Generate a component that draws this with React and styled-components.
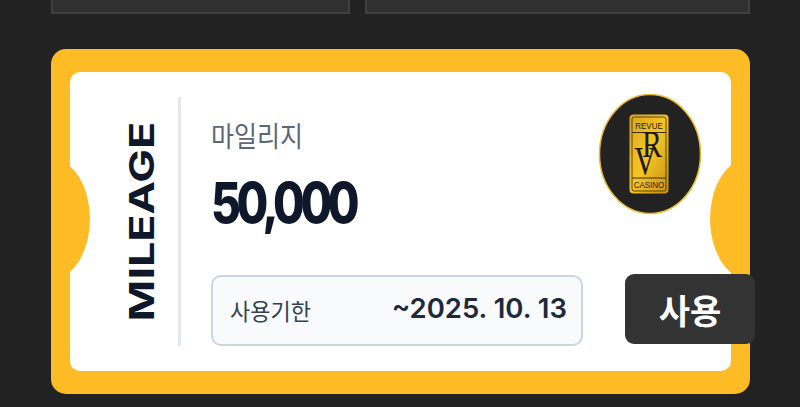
import styled, { createGlobalStyle } from "styled-components";

const GlobalStyle = createGlobalStyle`
  html, body {
    margin: 0;
    padding: 0;
    background: #222222;
    overflow: hidden;
  }
  body {
    font-family: "Noto Sans CJK KR", "Noto Sans", sans-serif;
  }
`;

const Page = styled.div`
  width: 800px;
  height: 407px;
  padding: 0 50px 0 51px;
  box-sizing: border-box;
  background: #222222;
`;

const TopRow = styled.div`
  display: grid;
  grid-template-columns: 299px 385px;
  gap: 15px;
  height: 14px;
  margin-bottom: 35px;
`;

const TopCard = styled.div`
  background: #303030;
  border: 2px solid #404040;
  border-top: 0;
`;

const Ticket = styled.div`
  position: relative;
  height: 345px;
  padding: 23px 19px;
  box-sizing: border-box;
  background: #fdbc25;
  border-radius: 15px;
`;

const Inner = styled.div`
  position: relative;
  display: flex;
  height: 299px;
  padding: 25px 0;
  box-sizing: border-box;
  background: #ffffff;
  border-radius: 10px;
  overflow: hidden;
`;

const Notch = styled.span`
  position: absolute;
  top: 86px;
  ${({ $side }) => ($side === "left" ? "left: -60px;" : "right: -59px;")}
  width: 80px;
  height: 122px;
  background: #fdbc25;
  border-radius: 50%;
`;

const SideLabel = styled.div`
  display: flex;
  align-items: center;
  justify-content: center;
  width: 108px;
  padding-left: 36px;
  box-sizing: border-box;
`;

const Mileage = styled.span`
  writing-mode: vertical-rl;
  transform: rotate(180deg) scaleY(1.32);
  font-family: "Inter", sans-serif;
  font-weight: 700;
  font-size: 34px;
  line-height: 1;
  color: #0f172a;
`;

const Divider = styled.div`
  width: 3px;
  background: #e2e8f0;
`;

const Content = styled.div`
  flex: 1;
  display: flex;
  flex-direction: column;
  padding-left: 30px;
`;

const TitleRow = styled.div`
  display: flex;
  justify-content: space-between;
  align-items: flex-start;
  padding-right: 29px;
  margin-top: -3px;
  height: 181px;
`;

const TitleBlock = styled.div`
  display: flex;
  flex-direction: column;
  padding-top: 23px;
`;

const Title = styled.div`
  font-size: 25px;
  line-height: 36px;
  font-weight: 400;
  color: #5d6778;
  transform: scaleY(1.12);
  transform-origin: left center;
`;

const Amount = styled.div`
  margin-top: 21px;
  font-family: "Inter", sans-serif;
  font-size: 46px;
  line-height: 56px;
  font-weight: 800;
  letter-spacing: -4.4px;
  color: #0f172a;
  transform: scaleY(1.22);
  transform-origin: left center;
`;

const LogoMark = styled.svg`
  display: block;
  width: 104px;
  height: 122px;
`;

const DateBox = styled.div`
  display: flex;
  justify-content: space-between;
  align-items: center;
  width: 372px;
  height: 71px;
  padding: 0 14px 0 17px;
  box-sizing: border-box;
  background: #f8fafc;
  border: 2px solid #cbd5e1;
  border-radius: 10px;
`;

const DateLabel = styled.span`
  font-size: 22px;
  color: #334155;
  transform: scaleY(1.05);
  margin-top: -3px;
`;

const DateValue = styled.span`
  font-family: "Inter", sans-serif;
  font-size: 27.5px;
  font-weight: 600;
  color: #1e293b;
  margin-top: -6px;
`;

const UseButton = styled.button`
  position: absolute;
  left: 574px;
  top: 225px;
  width: 130px;
  height: 70px;
  padding: 0;
  border: 0;
  border-radius: 9px;
  background: #333333;
  color: #ffffff;
  font-family: "Noto Sans CJK KR", sans-serif;
  font-size: 34px;
  font-weight: 700;
`;

const Logo = () => (
  <LogoMark viewBox="0 0 104 122">
    <defs>
      <linearGradient id="gold" x1="0" y1="0" x2="1" y2="1">
        <stop offset="0" stopColor="#d9a41f" />
        <stop offset="0.5" stopColor="#f5c526" />
        <stop offset="1" stopColor="#c48f14" />
      </linearGradient>
    </defs>
    <ellipse cx="52" cy="60" rx="50.5" ry="59.5" fill="#222222" stroke="#e9b82e" strokeWidth="1.5" />
    <rect x="31.5" y="20.5" width="39" height="79" rx="4" fill="url(#gold)" />
    <rect x="34" y="23" width="34" height="74" rx="2" fill="none" stroke="#3a2e0d" strokeWidth="0.8" />
    <path d="M34 38.5H68M34 84H68" stroke="#3a2e0d" strokeWidth="1" />
    <text transform="translate(51 35) scale(1 1.15)" textAnchor="middle" fontFamily="Liberation Sans, sans-serif" fontSize="8" fill="#2a2208">REVUE</text>
    <text transform="translate(51 93.5) scale(1 1.15)" textAnchor="middle" fontFamily="Liberation Sans, sans-serif" fontSize="8" fill="#2a2208">CASINO</text>
    <text transform="translate(54 63) scale(1 1.25)" textAnchor="middle" fontFamily="Liberation Serif, serif" fontSize="30" fill="#1f1a08">R</text>
    <text transform="translate(47 80) scale(1 1.3)" textAnchor="middle" fontFamily="Liberation Serif, serif" fontSize="30" fill="#1f1a08">V</text>
  </LogoMark>
);

export default function App() {
  return (
    <>
      <GlobalStyle />
      <Page>
        <TopRow>
          <TopCard />
          <TopCard />
        </TopRow>
        <Ticket>
          <Inner>
            <Notch $side="left" />
            <Notch $side="right" />
            <SideLabel>
              <Mileage>MILEAGE</Mileage>
            </SideLabel>
            <Divider />
            <Content>
              <TitleRow>
                <TitleBlock>
                  <Title>마일리지</Title>
                  <Amount>50,000</Amount>
                </TitleBlock>
                <Logo />
              </TitleRow>
              <DateBox>
                <DateLabel>사용기한</DateLabel>
                <DateValue>~2025. 10. 13</DateValue>
              </DateBox>
            </Content>
          </Inner>
          <UseButton>사용</UseButton>
        </Ticket>
      </Page>
    </>
  );
}
